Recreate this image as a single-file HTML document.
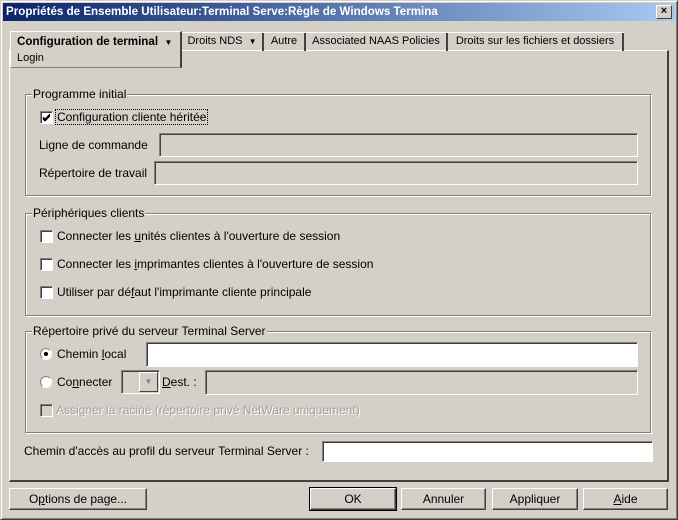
<!DOCTYPE html>
<html><head><meta charset="utf-8"><style>
*{box-sizing:border-box;margin:0;padding:0}
body{width:678px;height:520px;background:#d4d0c8;font-family:"Liberation Sans",Arial,sans-serif;font-size:12px;color:#000;position:relative;overflow:hidden}
.a{position:absolute;white-space:nowrap}
.win{position:absolute;left:0;top:0;width:678px;height:520px;border:1px solid;border-color:#d4d0c8 #404040 #404040 #d4d0c8;box-shadow:inset 1px 1px #fff,inset -1px -1px #808080}
.title{left:3px;top:3px;width:672px;height:18px;background:linear-gradient(90deg,#0a246a,#a6caf0);color:#fff;font-weight:bold;font-size:11.6px;line-height:18px;padding-left:3px}
.close{right:6px;top:5px;width:16px;height:14px;background:#d4d0c8;border:1px solid;border-color:#fff #404040 #404040 #fff;font-size:11px;line-height:11px;text-align:center;font-weight:bold;color:#000}
.tab{top:33px;height:18px;line-height:16px;border-right:2px solid #404040;font-size:11px;text-align:center}
.panel{left:9px;top:50px;width:660px;height:432px;border:1px solid;border-color:#fff #404040 #404040 #fff;border-right-width:2px;border-bottom-width:2px}
.grp{border:1px solid #808080;box-shadow:1px 1px #fff,inset 1px 1px #fff}
.leg{background:#d4d0c8;padding:0 1px}
.cb{width:13px;height:13px;background:#fff;border:1px solid;border-color:#808080 #fff #fff #808080;box-shadow:inset 1px 1px #404040}
.in{border:1px solid;border-color:#808080 #fff #fff #808080;box-shadow:inset 1px 1px #404040}
.btn{top:488px;height:22px;border:1px solid;border-color:#fff #404040 #404040 #fff;box-shadow:inset -1px -1px #808080;text-align:center;line-height:20px}
.rad{width:12px;height:12px;border-radius:50%;background:#fff;border:1px solid;border-color:#808080 #fff #fff #808080}
u{text-decoration:underline}
</style></head><body>
<div class="win"></div>
<div class="a title">Propriétés de Ensemble Utilisateur:Terminal Serve:Règle de Windows Termina</div>
<div class="a close">×</div>
<div class="a panel"></div>
<!-- tabs -->
<div class="a" style="left:10px;top:31px;width:172px;height:37px;background:#d4d0c8;border-top:1px solid #fff;border-left:1px solid #fff;border-right:2px solid #404040;border-bottom:1px solid #808080"></div>
<div class="a" style="left:17px;top:35px;font-weight:bold;font-size:11.6px">Configuration de terminal &nbsp;<span style="font-size:8px">▼</span></div>
<div class="a" style="left:17px;top:52px;font-size:11px">Login</div>
<div class="a tab" style="left:182px;width:82px">Droits NDS &nbsp;<span style="font-size:8px">▼</span></div>
<div class="a tab" style="left:264px;width:42px">Autre</div>
<div class="a tab" style="left:306px;width:142px">Associated NAAS Policies</div>
<div class="a tab" style="left:448px;width:176px">Droits sur les fichiers et dossiers</div>
<div class="a" style="left:182px;top:32px;width:442px;height:1px;background:#fff"></div>
<!-- group 1 -->
<div class="a grp" style="left:25px;top:94px;width:626px;height:102px"></div>
<div class="a leg" style="left:32px;top:87px">Programme initial</div>
<div class="a cb" style="left:40px;top:111px"></div>
<svg class="a" style="left:42px;top:113px" width="9" height="9"><path d="M1 4 L3 6 L8 1 M1 5 L3 7 L8 2 M1 6 L3 8 L8 3" stroke="#000" stroke-width="1" fill="none"/></svg>
<div class="a" style="left:55px;top:109px;border:1px dotted #000;padding:0 1px">Configuration cliente héritée</div>
<div class="a" style="left:39px;top:138px">Ligne de commande</div>
<div class="a in" style="left:159px;top:133px;width:479px;height:24px"></div>
<div class="a" style="left:39px;top:166px">Répertoire de travail</div>
<div class="a in" style="left:154px;top:161px;width:484px;height:24px"></div>
<!-- group 2 -->
<div class="a grp" style="left:25px;top:213px;width:626px;height:103px"></div>
<div class="a leg" style="left:32px;top:206px">Périphériques clients</div>
<div class="a cb" style="left:40px;top:230px"></div><div class="a" style="left:57px;top:229px">Connecter les <u>u</u>nités clientes à l'ouverture de session</div>
<div class="a cb" style="left:40px;top:258px"></div><div class="a" style="left:57px;top:257px">Connecter les <u>i</u>mprimantes clientes à l'ouverture de session</div>
<div class="a cb" style="left:40px;top:286px"></div><div class="a" style="left:57px;top:285px">Utiliser par dé<u>f</u>aut l'imprimante cliente principale</div>
<!-- group 3 -->
<div class="a grp" style="left:25px;top:331px;width:626px;height:102px"></div>
<div class="a leg" style="left:32px;top:324px">Répertoire privé du serveur Terminal Server</div>
<div class="a rad" style="left:40px;top:348px"></div><div class="a" style="left:44px;top:352px;width:4px;height:4px;background:#000;border-radius:50%"></div>
<div class="a" style="left:57px;top:347px">Chemin <u>l</u>ocal</div>
<div class="a in" style="left:146px;top:342px;width:492px;height:25px;background:#fff"></div>
<div class="a rad" style="left:40px;top:376px"></div>
<div class="a" style="left:57px;top:375px">Co<u>n</u>necter</div>
<div class="a in" style="left:121px;top:370px;width:39px;height:24px"></div>
<div class="a" style="left:139px;top:372px;width:19px;height:20px;border:1px solid;border-color:#fff #404040 #404040 #fff;text-align:center;font-size:8px;line-height:18px;color:#808080">▼</div>
<div class="a" style="left:162px;top:375px"><u>D</u>est. :</div>
<div class="a in" style="left:205px;top:370px;width:433px;height:25px"></div>
<div class="a cb" style="left:40px;top:404px;background:#d4d0c8"></div>
<div class="a" style="left:56px;top:403px;color:#a0a0a0;text-shadow:1px 1px #fff">Assigner la racine (répertoire privé NetWare uniquement)</div>
<!-- profile -->
<div class="a" style="left:24px;top:444px">Chemin d'accès au profil du serveur Terminal Server :</div>
<div class="a in" style="left:322px;top:441px;width:331px;height:21px;background:#fff"></div>
<!-- buttons -->
<div class="a btn" style="left:9px;width:138px">O<u>p</u>tions de page...</div>
<div class="a btn" style="left:310px;width:86px;outline:1px solid #000">OK</div>
<div class="a btn" style="left:401px;width:85px">Annuler</div>
<div class="a btn" style="left:492px;width:86px">Appliquer</div>
<div class="a btn" style="left:583px;width:85px"><u>A</u>ide</div>
</body></html>
